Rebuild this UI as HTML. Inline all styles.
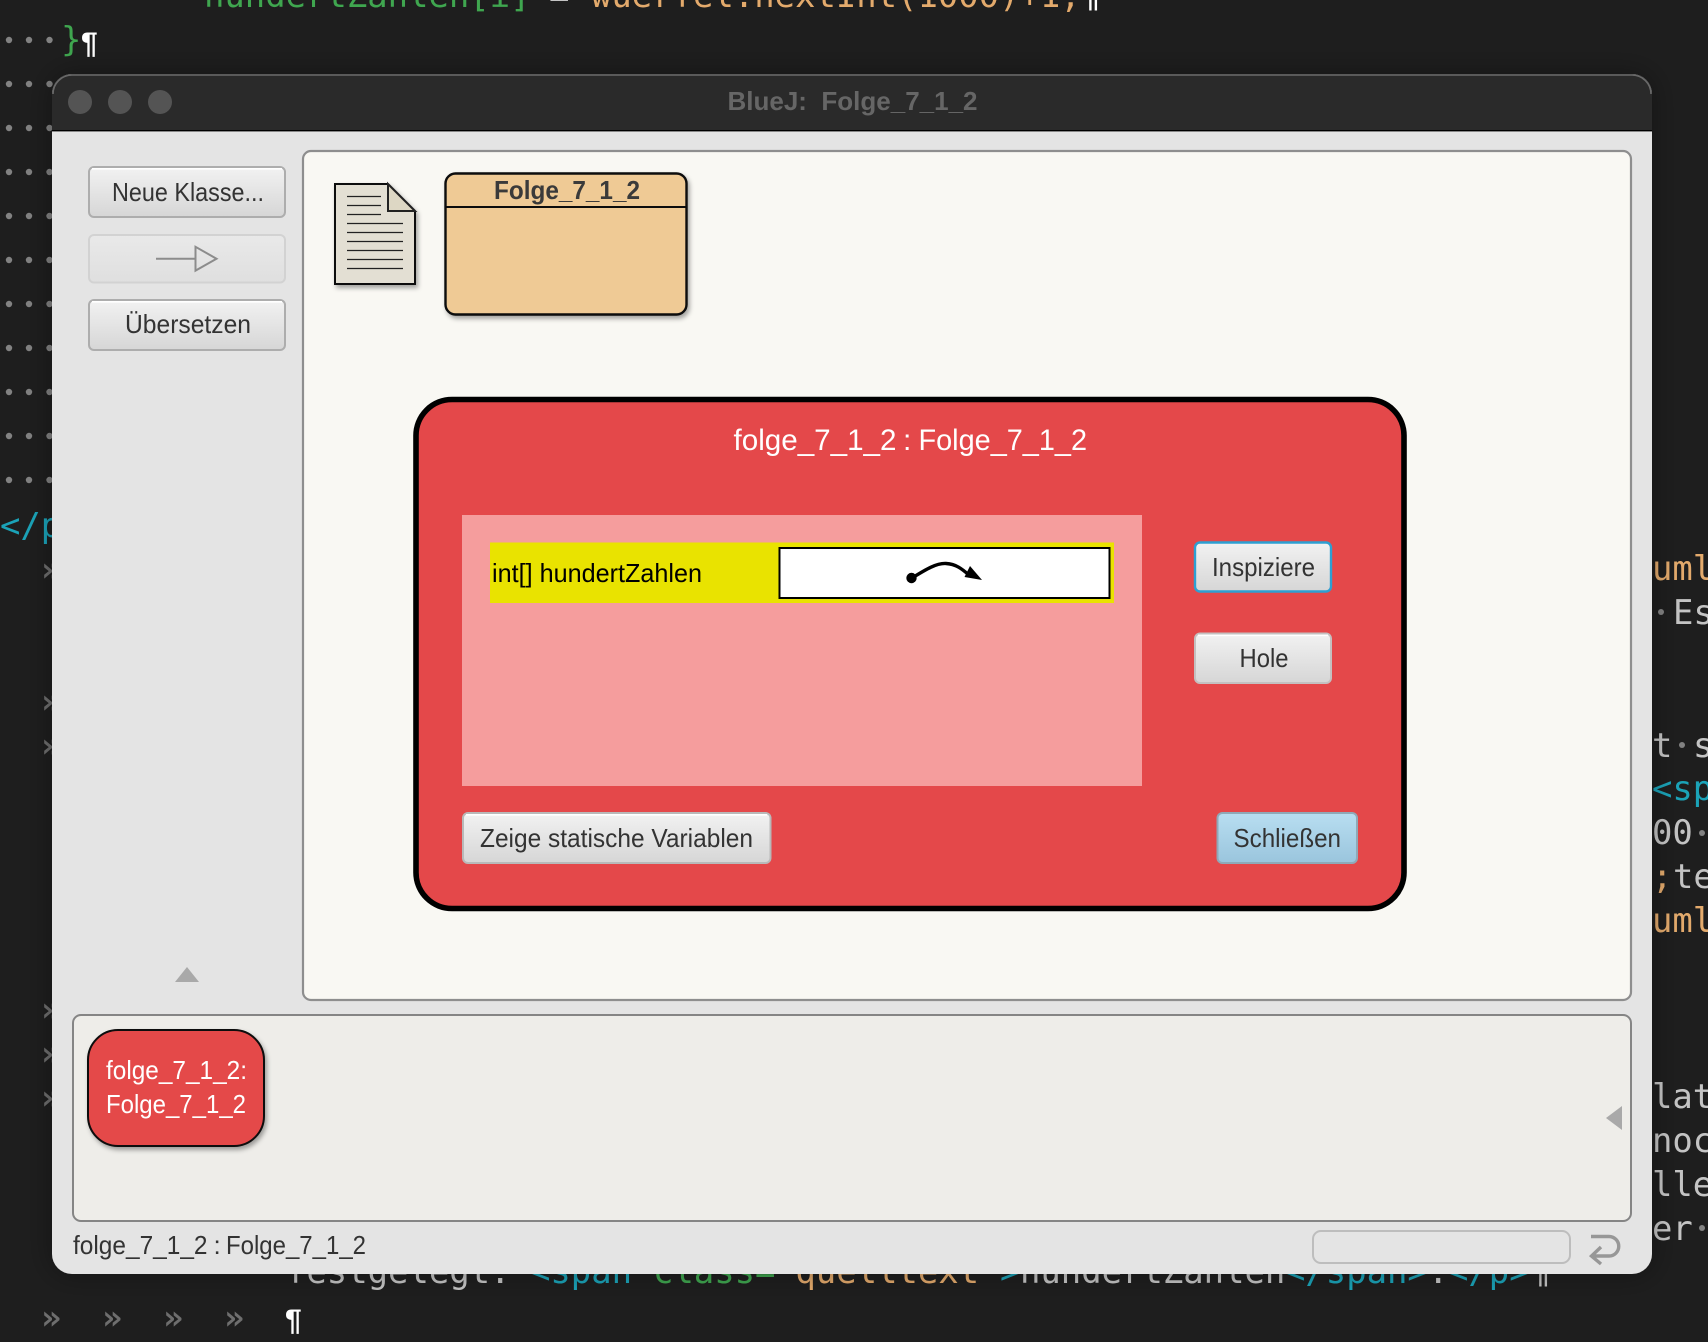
<!DOCTYPE html>
<html><head><meta charset="utf-8"><title>BlueJ: Folge_7_1_2</title>
<style>
html,body{margin:0;padding:0;background:#1e1e1e;width:1708px;height:1342px;overflow:hidden}
svg{display:block;position:absolute;left:0;top:0}
.c{font-family:"DejaVu Sans Mono","Liberation Mono",monospace;font-size:33.9px;white-space:pre}
.u{font-family:"Liberation Sans",sans-serif;font-size:26px;fill:#333}
.g{fill:#3fa64f}.o{fill:#e3aa6c}.t{fill:#1ba3b8}.n{fill:#c4c4c4}.v{fill:#6e6e6e;font-weight:bold}.p{fill:#fff}
.hl{fill:none;stroke:#fff;stroke-width:1.6}
</style></head><body>
<svg width="1708" height="1342" viewBox="0 0 1708 1342" xmlns="http://www.w3.org/2000/svg">
<defs>
<linearGradient id="bg" x1="0" y1="0" x2="0" y2="1"><stop offset="0" stop-color="#f2f2f2"/><stop offset="1" stop-color="#d6d6d6"/></linearGradient>
<linearGradient id="bd" x1="0" y1="0" x2="0" y2="1"><stop offset="0" stop-color="#e9e9e9"/><stop offset="1" stop-color="#dfdfdf"/></linearGradient>
<linearGradient id="bb" x1="0" y1="0" x2="0" y2="1"><stop offset="0" stop-color="#b8deF1"/><stop offset="1" stop-color="#9ac5dd"/></linearGradient>
<filter id="s" x="-20%" y="-20%" width="140%" height="140%"><feDropShadow dx="2" dy="3" stdDeviation="2.5" flood-color="#000" flood-opacity=".35"/></filter>
<filter id="ws" x="-5%" y="-5%" width="110%" height="110%"><feDropShadow dx="0" dy="0" stdDeviation="14" flood-color="#000" flood-opacity=".35"/></filter>
</defs>

<rect width="1708" height="1342" fill="#1e1e1e"/>

<!-- background code -->
<g fill="#828282">
<circle cx="9" cy="40" r="3.2"/><circle cx="29" cy="40" r="3.2"/><circle cx="49.5" cy="40" r="3.2"/>
<circle cx="9" cy="84" r="3.2"/><circle cx="29" cy="84" r="3.2"/><circle cx="49.5" cy="84" r="3.2"/>
<circle cx="9" cy="128" r="3.2"/><circle cx="29" cy="128" r="3.2"/><circle cx="49.5" cy="128" r="3.2"/>
<circle cx="9" cy="172" r="3.2"/><circle cx="29" cy="172" r="3.2"/><circle cx="49.5" cy="172" r="3.2"/>
<circle cx="9" cy="216" r="3.2"/><circle cx="29" cy="216" r="3.2"/><circle cx="49.5" cy="216" r="3.2"/>
<circle cx="9" cy="260" r="3.2"/><circle cx="29" cy="260" r="3.2"/><circle cx="49.5" cy="260" r="3.2"/>
<circle cx="9" cy="304" r="3.2"/><circle cx="29" cy="304" r="3.2"/><circle cx="49.5" cy="304" r="3.2"/>
<circle cx="9" cy="348" r="3.2"/><circle cx="29" cy="348" r="3.2"/><circle cx="49.5" cy="348" r="3.2"/>
<circle cx="9" cy="392" r="3.2"/><circle cx="29" cy="392" r="3.2"/><circle cx="49.5" cy="392" r="3.2"/>
<circle cx="9" cy="436" r="3.2"/><circle cx="29" cy="436" r="3.2"/><circle cx="49.5" cy="436" r="3.2"/>
<circle cx="9" cy="480" r="3.2"/><circle cx="29" cy="480" r="3.2"/><circle cx="49.5" cy="480" r="3.2"/>
</g>
<text class="c" y="7"><tspan class="g" x="204">hundertZahlen[i]</tspan><tspan class="n" x="549">=</tspan><tspan class="o" x="591">wuerfel.nextInt(1000)+1;</tspan><tspan class="p" x="1080">¶</tspan></text>
<text class="c g" x="61" y="51">}</text><text x="81" y="53" class="p" font-family="Liberation Sans" font-weight="bold" font-size="30">¶</text>
<text class="c t" x="0" y="537">&lt;/p&gt;</text>
<g class="c v">
<text x="41" y="581">»</text><text x="41" y="713">»</text><text x="41" y="757">»</text>
<text x="41" y="1021">»</text><text x="41" y="1065">»</text><text x="41" y="1109">»</text>
<text x="41" y="1329">»</text><text x="102" y="1329">»</text><text x="163" y="1329">»</text><text x="224" y="1329">»</text>
</g>
<text x="285" y="1330" class="p" font-family="Liberation Sans" font-weight="bold" font-size="30">¶</text>
<text class="c" y="1283"><tspan class="n" x="286">festgelegt:</tspan><tspan class="t" x="530">&lt;span</tspan><tspan class="g" x="653">class=</tspan><tspan class="o" x="775">"quelltext"</tspan><tspan class="t" x="1000">&gt;</tspan><tspan class="n" x="1020">hundertZahlen</tspan><tspan class="t" x="1285">&lt;/span&gt;</tspan><tspan class="n" x="1428">.</tspan><tspan class="t" x="1448">&lt;/p&gt;</tspan><tspan class="n" x="1530">¶</tspan></text>
<g class="c">
<text class="o" x="1652" y="580">uml</text>
<text class="n" x="1673" y="624">Es</text><circle cx="1661" cy="612" r="3" fill="#828282"/>
<text class="n" x="1652" y="757">t</text><circle cx="1682" cy="745" r="3" fill="#828282"/><text class="n" x="1693" y="757">s</text>
<text class="t" x="1652" y="800">&lt;sp</text>
<text class="n" x="1652" y="844">00</text><circle cx="1702" cy="833" r="3" fill="#828282"/>
<text class="o" x="1652" y="888">;</text><text class="n" x="1673" y="888">te</text>
<text class="o" x="1652" y="932">uml</text>
<text class="n" x="1652" y="1108">lat</text>
<text class="n" x="1652" y="1152">noc</text>
<text class="n" x="1652" y="1196">lle</text>
<text class="n" x="1652" y="1240">er</text><circle cx="1702" cy="1228" r="3" fill="#828282"/>
</g>

<!-- window -->
<rect x="52" y="74" width="1600" height="1200" rx="20" fill="#e4e4e4" filter="url(#ws)"/>
<path d="M52 131V94a20 20 0 0 1 20-20H1632a20 20 0 0 1 20 20V131Z" fill="#2a2a2a"/>
<path d="M53 94a19 19 0 0 1 19-19H1632a19 19 0 0 1 19 19" fill="none" stroke="#6a6a6a" stroke-width="1.6"/>
<rect x="52" y="130" width="1600" height="1.4" fill="#000"/>
<circle cx="80" cy="102" r="12" fill="#545454"/><circle cx="120" cy="102" r="12" fill="#545454"/><circle cx="160" cy="102" r="12" fill="#545454"/>
<text class="u" x="727.5" y="110" font-weight="bold" style="fill:#666" textLength="250" lengthAdjust="spacingAndGlyphs" xml:space="preserve">BlueJ:  Folge_7_1_2</text>

<!-- left buttons -->
<rect x="89" y="167" width="196" height="50" rx="5" fill="url(#bg)" stroke="#adadad" stroke-width="2"/>
<path class="hl" d="M92 168.8H282"/>
<text class="u" x="112" y="201" textLength="152" lengthAdjust="spacingAndGlyphs">Neue Klasse...</text>
<rect x="89" y="235" width="196" height="47.5" rx="5" fill="url(#bd)" stroke="#d2d2d2" stroke-width="2"/>
<path d="M156 258.7H195.5M195.5 246.8V270.6L216.5 258.7Z" fill="none" stroke="#8c8c8c" stroke-width="2"/>
<rect x="89" y="300" width="196" height="50" rx="5" fill="url(#bg)" stroke="#adadad" stroke-width="2"/>
<path class="hl" d="M92 301.8H282"/>
<text class="u" x="125" y="333" textLength="126" lengthAdjust="spacingAndGlyphs">Übersetzen</text>
<path d="M175 982L187 967L199 982Z" fill="#a9a9a9"/>

<!-- canvas -->
<rect x="303" y="151" width="1328" height="849" rx="8" fill="#f9f8f3" stroke="#8e8e8e" stroke-width="2.2"/>

<!-- doc icon -->
<path d="M335 184H388L415 211V284H335Z" fill="#e3dfd3" stroke="#111" stroke-width="2" filter="url(#s)"/>
<path d="M388 184V211H415Z" fill="#ddd7c4" stroke="#222" stroke-width="2"/>
<path d="M347 196.5H381M347 205.5H381M347 214.5H381M347 223.5H403M347 232.5H403M347 241.5H403M347 250.5H403M347 259.5H403M347 268.5H403" stroke="#222" stroke-width="1.2" fill="none"/>

<!-- class box -->
<rect x="445.5" y="173.5" width="241" height="141" rx="10" fill="#efca95" stroke="#0c0c0c" stroke-width="2.4" filter="url(#s)"/>
<path d="M446 207H686" stroke="#0c0c0c" stroke-width="2"/>
<text class="u" x="494" y="199" font-weight="bold" textLength="146" lengthAdjust="spacingAndGlyphs" style="fill:#3a3a3a">Folge_7_1_2</text>

<!-- inspector -->
<rect x="416" y="399.5" width="988" height="509" rx="36" fill="#e4484a" stroke="#000" stroke-width="5.6"/>
<text class="u" style="font-size:30px;fill:#fff" x="733.5" y="450" textLength="163" lengthAdjust="spacingAndGlyphs">folge_7_1_2</text>
<text class="u" style="font-size:30px;fill:#fff" x="903" y="450">:</text>
<text class="u" style="font-size:30px;fill:#fff" x="918.5" y="450" textLength="168.5" lengthAdjust="spacingAndGlyphs">Folge_7_1_2</text>
<rect x="462" y="515" width="680" height="271" fill="#f59d9d"/>
<rect x="490" y="542.5" width="624" height="60.5" fill="#e9e300"/>
<rect x="779.5" y="548" width="330" height="50" fill="#fff" stroke="#000" stroke-width="2"/>
<text class="u" style="fill:#000" x="492" y="582" textLength="210" lengthAdjust="spacingAndGlyphs">int[] hundertZahlen</text>
<circle cx="911.5" cy="578" r="5.2" fill="#000"/>
<path d="M912 578C925 570 936 563 946 563.5C956 564 962 569 969 575" fill="none" stroke="#000" stroke-width="3.4"/>
<path d="M982 580L964.5 577L970 566Z" fill="#000"/>
<rect x="463" y="813" width="307.5" height="50" rx="5" fill="url(#bg)" stroke="#b9b9b9" stroke-width="2"/>
<path class="hl" d="M466 814.8H767"/>
<text class="u" x="480" y="847" textLength="273" lengthAdjust="spacingAndGlyphs">Zeige statische Variablen</text>
<rect x="1195" y="542.5" width="136" height="49" rx="5" fill="url(#bg)" stroke="#2e9fd2" stroke-width="2.4"/>
<text class="u" x="1212" y="576" textLength="103" lengthAdjust="spacingAndGlyphs">Inspiziere</text>
<rect x="1195" y="633.5" width="136" height="49.5" rx="5" fill="url(#bg)" stroke="#c4c0c0" stroke-width="2"/>
<path class="hl" d="M1198 635.3H1328"/>
<text class="u" x="1239.5" y="667" textLength="49" lengthAdjust="spacingAndGlyphs">Hole</text>
<rect x="1217.5" y="813" width="139.5" height="50" rx="5" fill="url(#bb)" stroke="#8fa9b8" stroke-width="2"/>
<text class="u" x="1233.5" y="847" textLength="107.5" lengthAdjust="spacingAndGlyphs">Schließen</text>

<!-- object bench -->
<rect x="73" y="1015" width="1558" height="206" rx="8" fill="#eeede9" stroke="#858585" stroke-width="2"/>
<rect x="88" y="1030" width="176" height="116" rx="30" fill="#e4484a" stroke="#0a0a0a" stroke-width="2" filter="url(#s)"/>
<text class="u" style="fill:#fff" x="106" y="1079" textLength="141" lengthAdjust="spacingAndGlyphs">folge_7_1_2:</text>
<text class="u" style="fill:#fff" x="106" y="1113" textLength="140" lengthAdjust="spacingAndGlyphs">Folge_7_1_2</text>
<path d="M1622 1106V1130L1606 1118Z" fill="#a9a9a9"/>

<!-- status -->
<text class="u" x="73" y="1254" textLength="134.5" lengthAdjust="spacingAndGlyphs">folge_7_1_2</text>
<text class="u" x="213.5" y="1254">:</text>
<text class="u" x="226" y="1254" textLength="140" lengthAdjust="spacingAndGlyphs">Folge_7_1_2</text>
<rect x="1313" y="1231" width="257" height="32" rx="8" fill="#e4e4e4" stroke="#bdbdbd" stroke-width="2"/>
<path d="M1591 1236.5H1609A9.7 9.7 0 0 1 1609 1256H1592M1601 1247L1591.5 1256L1601 1264" fill="none" stroke="#979797" stroke-width="3.4"/>
</svg>
</body></html>
